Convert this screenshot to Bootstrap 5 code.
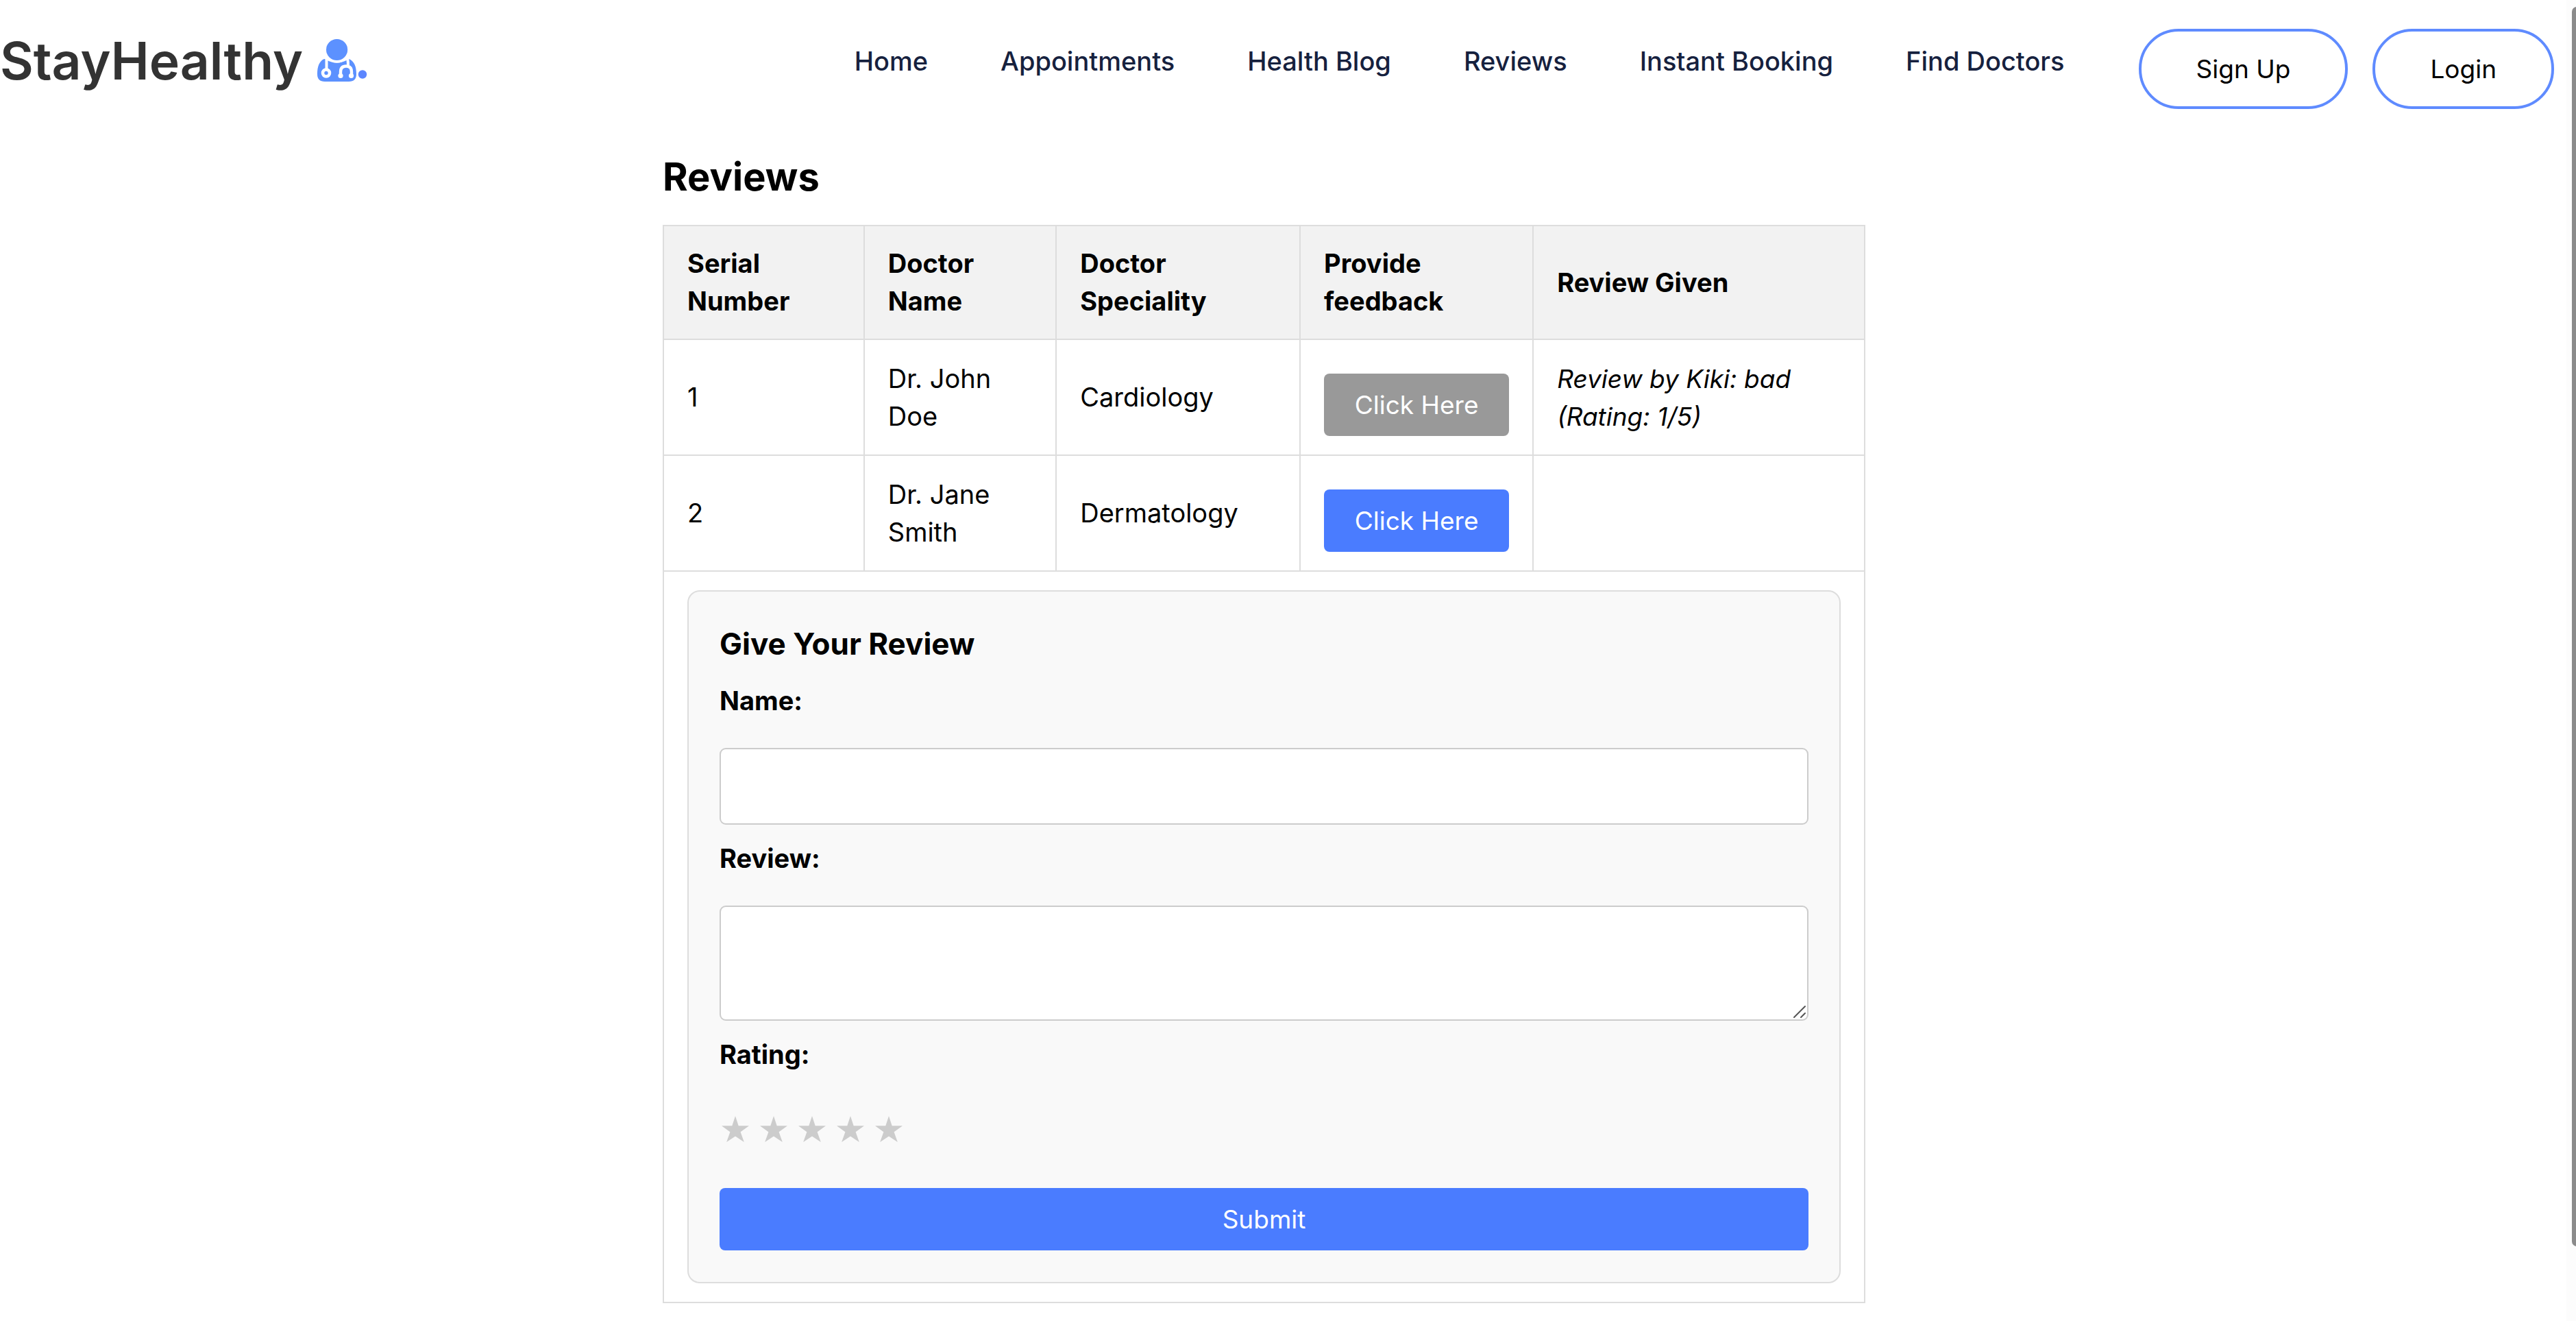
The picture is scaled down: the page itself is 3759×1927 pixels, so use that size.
<!DOCTYPE html>
<html lang="en">
<head>
<meta charset="utf-8">
<meta name="viewport" content="width=device-width, initial-scale=1">
<title>StayHealthy - Reviews</title>
<link href="https://cdn.jsdelivr.net/npm/bootstrap@5.3.0/dist/css/bootstrap.min.css" rel="stylesheet">
<style>
  body { font-family: Inter, "Open Sans", sans-serif; font-size: 38px; line-height: 55px; color: #000; background: #fff; padding-right: 14px; }
  .site-nav { padding: 42px 18px 0 0; }
  .brand-link { color: #333; font-size: 75px; font-weight: 600; line-height: 94px; gap: 20px; text-decoration: none; }
  .menu-list { gap: 106px; padding-right: 108px; line-height: 94px; }
  .menu-list a { color: #16213e; font-weight: 500; text-decoration: none; }
  .pill-row { gap: 36px; }
  .pill-btn { border: 4px solid #5f8bff; border-radius: 58px; padding: 27px 80px; font-size: 37px; line-height: 55px; color: #000; background: #fff; }
  .page-main { padding-right: 56px; }
  .reviews-box { max-width: 1755px; }
  .page-title { font-size: 56px; line-height: 84px; font-weight: 700; margin: 57px 0 28px; }
  .reviews-table { table-layout: fixed; border-collapse: collapse; width: 100%; }
  .reviews-table th, .reviews-table td { border: 2px solid #ddd; padding: 27px 34px; vertical-align: middle; text-align: left; }
  .reviews-table th { background: #f2f2f2; font-weight: 700; }
  .reviews-table em { font-size: 37px; }
  .act-btn { border: 0; border-radius: 8px; background: #4a7cff; color: #fff; font-size: 37px; line-height: 55px; padding: 18px 0; width: 100%; display: block; }
  .row-btn { margin-top: 22px; }
  .act-btn:disabled { background: #999; }
  .review-form { background: #f9f9f9; border: 2px solid #ddd; border-radius: 18px; padding: 49px 45px 46px; }
  .form-title { font-size: 44px; line-height: 55px; font-weight: 700; margin: 0 0 28px; }
  .field-label { font-weight: 700; margin-bottom: 41px; display: block; }
  .text-field { border: 2px solid #ccc; border-radius: 9px; background: #fff; font-size: 37px; display: block; width: 100%; height: 112px; margin-bottom: 22px; padding: 18px; }
  textarea.text-field { height: 168px; resize: none; }
  .star-row { gap: 10px; margin-bottom: 46px; height: 80px; }
  .star-row label { width: 46px; text-align: center; line-height: 0; }
  .grip { right: 3px; bottom: 3px; line-height: 0; }
  .scroll-track { top: 0; right: 0; width: 14px; height: 100%; background: #fcfcfc; padding: 10px 0 109px 8px; overflow: hidden; }
  .scroll-thumb { width: 14px; height: 100%; border-radius: 7px; background: #8b8b8b; }
</style>
<script src="https://cdn.jsdelivr.net/npm/bootstrap@5.3.0/dist/js/bootstrap.bundle.min.js"></script>
</head>
<body>
<header>
  <nav class="site-nav d-flex justify-content-between align-items-start">
    <a class="brand-link d-flex align-items-start" href="#">
      <span>StayHealthy</span>
      <svg width="74" height="94" viewBox="461 42 74 94" aria-hidden="true">
        <g fill="#5c91ff">
          <circle cx="490.600" cy="72.500" r="15.600"/>
          <path d="M472 86C465 89 462 97 462 108q0 11 11 11h35q11 0 11-11C519 97 516 89 508 86l-4 1q-13 9-26 0z"/>
        </g>
        <circle cx="528" cy="108.500" r="6.200" fill="#5c86ff"/>
        <g fill="none" stroke="#fff">
          <path stroke-width="2.500" d="M476 86.500q14.500 8 29 0"/>
          <path stroke-width="4" d="M475.500 85v16M506 85q1 5 1 10"/>
          <circle cx="475" cy="106.500" r="5" stroke-width="4.600"/>
          <path stroke-width="4.400" d="M496 110v-5q0-8.500 8-8.500t8 8.500v5"/>
        </g>
        <g fill="#fff"><circle cx="496" cy="110.500" r="3.600"/><circle cx="511.500" cy="110.500" r="3.600"/></g>
      </svg>
    </a>
    <div class="d-flex align-items-start">
      <ul class="menu-list list-unstyled d-flex mb-0">
        <li><a href="#">Home</a></li>
        <li><a href="#">Appointments</a></li>
        <li><a href="#">Health Blog</a></li>
        <li><a href="#">Reviews</a></li>
        <li><a href="#">Instant Booking</a></li>
        <li><a href="#">Find Doctors</a></li>
      </ul>
      <div class="pill-row d-flex">
        <button type="button" class="pill-btn">Sign Up</button>
        <button type="button" class="pill-btn">Login</button>
      </div>
    </div>
  </nav>
</header>
<main class="page-main">
  <div class="reviews-box mx-auto">
    <h1 class="page-title">Reviews</h1>
    <table class="reviews-table">
      <colgroup><col style="width:16.7%"><col style="width:16%"><col style="width:20.3%"><col style="width:19.4%"><col style="width:27.6%"></colgroup>
      <thead>
        <tr><th scope="col">Serial<br>Number</th><th scope="col">Doctor<br>Name</th><th scope="col">Doctor<br>Speciality</th><th scope="col">Provide feedback</th><th scope="col">Review Given</th></tr>
      </thead>
      <tbody>
        <tr><td>1</td><td>Dr. John<br>Doe</td><td>Cardiology</td><td><button type="button" class="act-btn row-btn" disabled>Click Here</button></td><td><em>Review by Kiki: bad<br>(Rating: 1/5)</em></td></tr>
        <tr><td>2</td><td>Dr. Jane<br>Smith</td><td>Dermatology</td><td><button type="button" class="act-btn row-btn">Click Here</button></td><td></td></tr>
        <tr><td colspan="5">
          <form class="review-form">
            <h2 class="form-title">Give Your Review</h2>
            <label class="field-label" for="name">Name:</label>
            <input class="text-field" type="text" id="name">
            <label class="field-label" for="review">Review:</label>
            <div class="position-relative">
              <textarea class="text-field" id="review"></textarea>
              <span class="grip position-absolute"><svg width="20" height="20" viewBox="0 0 20 20" aria-hidden="true"><path d="M2 18 18 2M12 18l6-6" stroke="#555" stroke-width="2" stroke-linecap="round"/></svg></span>
            </div>
            <div role="radiogroup" aria-labelledby="rating-label">
              <span class="field-label" id="rating-label">Rating:</span>
              <div class="star-row d-flex align-items-center" id="stars"></div>
            </div>
            <button type="submit" class="act-btn">Submit</button>
          </form>
        </td></tr>
      </tbody>
    </table>
  </div>
</main>
<div class="scroll-track position-fixed" aria-hidden="true"><div class="scroll-thumb"></div></div>
<script>
  const stars = document.getElementById('stars');
  for (let n = 1; n <= 5; n++) {
    stars.insertAdjacentHTML('beforeend',
      `<label><input class="visually-hidden" type="radio" name="rating" value="${n}" aria-label="${n} of 5"><svg width="40" height="38" viewBox="0 0 40 38" aria-hidden="true"><path fill="#ccc" d="M20 0 24.700 14.300H40L27.600 23.300 32.800 38 20 29.500 7.200 38 12.400 23.300 0 14.300H15.300z"/></svg></label>`);
  }
</script>
</body>
</html>
